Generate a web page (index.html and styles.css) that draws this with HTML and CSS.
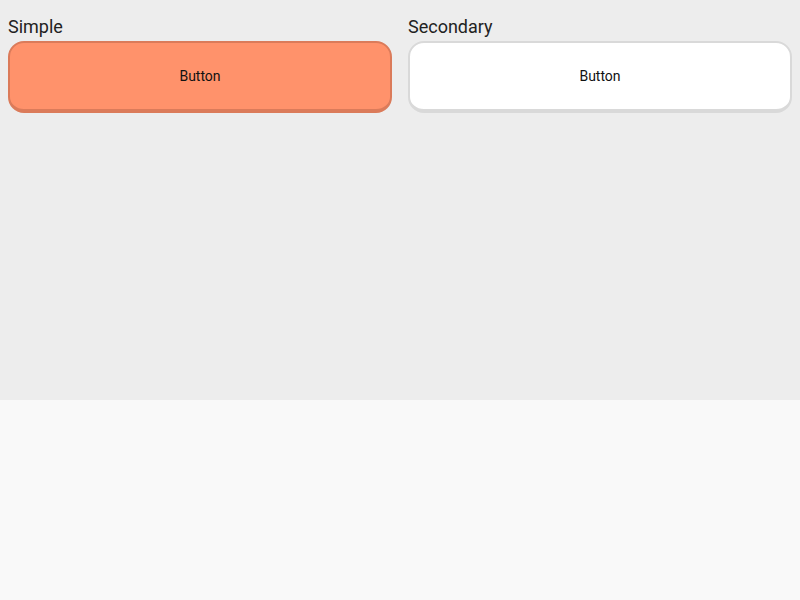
FILE: index.html
```html
<!DOCTYPE html>
<html>
<head>
<meta charset="utf-8">
<link rel="stylesheet" href="styles.css">
</head>
<body>
<div class="stage">
  <div class="col">
    <div class="label">Simple</div>
    <button class="btn btn-simple">Button</button>
  </div>
  <div class="col">
    <div class="label">Secondary</div>
    <button class="btn btn-secondary">Button</button>
  </div>
</div>
</body>
</html>
```
FILE: styles.css
```css
html, body {
  margin: 0;
  padding: 0;
  background: #f9f9f9;
  font-family: Roboto, "Liberation Sans", sans-serif;
}
.stage {
  height: 400px;
  box-sizing: border-box;
  background: #ededed;
  padding: 16px 8px;
  display: grid;
  grid-template-columns: 1fr 1fr;
  column-gap: 16px;
  align-items: start;
}
.col {
  display: flex;
  flex-direction: column;
  gap: 4px;
}
.label {
  font-size: 18px;
  line-height: 21px;
  color: #222;
}
.btn {
  height: 72px;
  box-sizing: border-box;
  border-radius: 16px;
  border: 2px solid;
  border-bottom-width: 4px;
  font-family: Roboto, "Liberation Sans", sans-serif;
  font-size: 14px;
  color: #111;
  padding: 0;
  cursor: pointer;
}
.btn-simple {
  background: #ff926b;
  border-color: #db7b5a;
}
.btn-secondary {
  background: #ffffff;
  border-color: #d9d9d9;
}
```
